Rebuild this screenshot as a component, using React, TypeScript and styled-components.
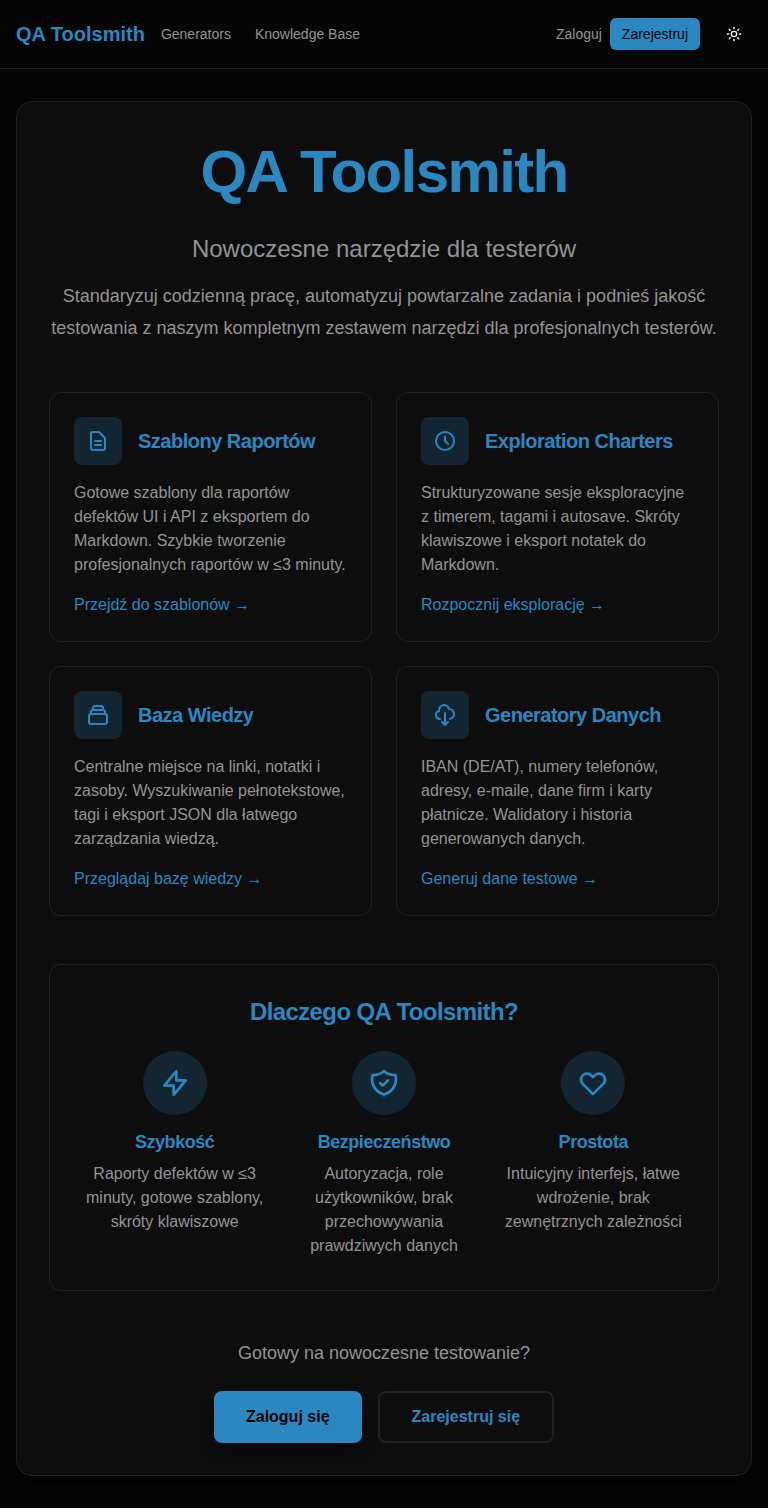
import React from "react";
import styled, { createGlobalStyle } from "styled-components";
import { Sun } from "lucide-react";

const color = {
  page: "#050505",
  panel: "#0d0d0d",
  line: "#212121",
  blue: "#2b87c0",
  tint: "#132530",
  text: "#949494",
};

const GlobalStyle = createGlobalStyle`
  *, *::before, *::after { box-sizing: border-box; }
  body {
    margin: 0;
    background: ${color.page};
    color: ${color.text};
    font: 16px/24px Arial, "Liberation Sans", sans-serif;
  }
  h1, h2, h3, p { margin: 0; }
  a { color: inherit; text-decoration: none; }
  button { font: inherit; cursor: pointer; }
`;

const Header = styled.header`
  display: flex;
  align-items: center;
  height: 69px;
  padding: 0 16px;
  border-bottom: 1px solid ${color.line};
  font-size: 14px;
  line-height: 20px;
`;

const Brand = styled.a`
  && { color: ${color.blue}; }
  font-size: 20px;
  line-height: 28px;
  font-weight: 700;
`;

const Nav = styled.nav`
  display: flex;
  gap: 24px;
  margin-left: 16px;
`;

const Account = styled.div`
  display: flex;
  align-items: center;
  gap: 8px;
  margin-left: auto;
`;

const SignUp = styled.a`
  padding: 6px 12px;
  border-radius: 6px;
  background: ${color.blue};
  && { color: ${color.page}; }
`;

const ThemeButton = styled.button`
  display: grid;
  place-items: center;
  width: 36px;
  height: 36px;
  margin-left: 8px;
  padding: 0;
  border: 0;
  background: none;
  color: #fafafa;
`;

const Main = styled.main`
  padding: 32px 16px;
`;

const Panel = styled.div`
  padding: 32px;
  border: 1px solid ${color.line};
  border-radius: 16px;
  background: ${color.panel};
  box-shadow: 0 10px 15px -3px rgba(0, 0, 0, 0.5), 0 4px 6px -4px rgba(0, 0, 0, 0.5);
`;

const Hero = styled.section`
  margin-bottom: 48px;
  text-align: center;
`;

const HeroTitle = styled.h1`
  margin-bottom: 24px;
  color: ${color.blue};
  font-size: 60px;
  line-height: 75px;
  font-weight: 700;
  letter-spacing: -0.027em;
`;

const Subtitle = styled.p`
  margin-bottom: 16px;
  font-size: 24px;
  line-height: 32px;
`;

const Lead = styled.p`
  font-size: 18px;
  line-height: 31.5px;
`;

const FeatureGrid = styled.section`
  display: grid;
  grid-template-columns: 1fr 1fr;
  gap: 24px;
  margin-bottom: 48px;
`;

const Card = styled.article`
  padding: 24px;
  border: 1px solid ${color.line};
  border-radius: 12px;
`;

const CardHead = styled.div`
  display: flex;
  align-items: center;
  gap: 16px;
  margin-bottom: 16px;
`;

const IconBox = styled.div<{ $round?: boolean }>`
  display: grid;
  place-items: center;
  width: ${(p) => (p.$round ? 64 : 48)}px;
  height: ${(p) => (p.$round ? 64 : 48)}px;
  border-radius: ${(p) => (p.$round ? "50%" : "8px")};
  background: ${color.tint};
  color: ${color.blue};
`;

const Heading = styled.h3<{ $size: number }>`
  color: ${color.blue};
  font-size: ${(p) => p.$size}px;
  line-height: 1.25;
  font-weight: 600;
  letter-spacing: -0.025em;
`;

const CardLink = styled.a`
  display: block;
  height: 24px;
  margin-top: 16px;
  && { color: ${color.blue}; }
`;

const Arrow = styled.span`
  font-family: "Liberation Serif", serif;
`;

const Why = styled.section`
  display: flex;
  flex-direction: column;
  gap: 24px;
  margin-bottom: 48px;
  padding: 32px;
  border: 1px solid ${color.line};
  border-radius: 12px;
  text-align: center;
`;

const Reasons = styled.div`
  display: grid;
  grid-template-columns: repeat(3, 1fr);
  gap: 24px;
`;

const Reason = styled.div`
  display: flex;
  flex-direction: column;
  align-items: center;

  ${Heading} { margin: 16px 0 8px; }
`;

const Cta = styled.section`
  text-align: center;
`;

const CtaText = styled.p`
  margin-bottom: 24px;
  font-size: 18px;
  line-height: 28px;
`;

const Actions = styled.div`
  display: flex;
  justify-content: center;
  gap: 16px;
`;

const Action = styled.a<{ $outlined?: boolean }>`
  display: flex;
  align-items: center;
  height: 52px;
  padding: 0 32px;
  border-radius: 8px;
  font-weight: 600;
  ${(p) =>
    p.$outlined
      ? `border: 2px solid ${color.line}; && { color: ${color.blue}; }`
      : `background: ${color.blue}; && { color: ${color.page}; }
         box-shadow: 0 10px 15px -3px rgba(0, 0, 0, 0.3), 0 4px 6px -4px rgba(0, 0, 0, 0.3);`}
`;

const paths = {
  document:
    "M9 12h6m-6 4h6m2 5H7a2 2 0 01-2-2V5a2 2 0 012-2h5.586a1 1 0 01.707.293l5.414 5.414a1 1 0 01.293.707V19a2 2 0 01-2 2z",
  clock: "M12 8v4l3 3m6-3a9 9 0 11-18 0 9 9 0 0118 0z",
  collection:
    "M19 11H5m14 0a2 2 0 012 2v6a2 2 0 01-2 2H5a2 2 0 01-2-2v-6a2 2 0 012-2m14 0V9a2 2 0 00-2-2M5 11V9a2 2 0 012-2m0 0V5a2 2 0 012-2h6a2 2 0 012 2v2M7 7h10",
  cloud: "M7 16a4 4 0 01-.88-7.903A5 5 0 1115.9 6L16 6a5 5 0 011 9.9M9 19l3 3m0 0l3-3m-3 3V10",
  bolt: "M13 10V3L4 14h7v7l9-11h-7z",
  shield:
    "M9 12l2 2 4-4m5.618-4.016A11.955 11.955 0 0112 2.944a11.955 11.955 0 01-8.618 3.04A12.02 12.02 0 003 9c0 5.591 3.824 10.29 9 11.622 5.176-1.332 9-6.03 9-11.622 0-1.042-.133-2.052-.382-3.016z",
  heart:
    "M4.318 6.318a4.5 4.5 0 000 6.364L12 20.364l7.682-7.682a4.5 4.5 0 00-6.364-6.364L12 7.636l-1.318-1.318a4.5 4.5 0 00-6.364 0z",
};

type IconName = keyof typeof paths;

const Icon = ({ name, size }: { name: IconName; size: number }) => (
  <svg width={size} height={size} viewBox="0 0 24 24" fill="none" stroke="currentColor" strokeWidth={2} strokeLinecap="round" strokeLinejoin="round">
    <path d={paths[name]} />
  </svg>
);

const features: { icon: IconName; title: string; text: string; link: string }[] = [
  {
    icon: "document",
    title: "Szablony Raportów",
    text: "Gotowe szablony dla raportów defektów UI i API z eksportem do Markdown. Szybkie tworzenie profesjonalnych raportów w ≤3 minuty.",
    link: "Przejdź do szablonów",
  },
  {
    icon: "clock",
    title: "Exploration Charters",
    text: "Strukturyzowane sesje eksploracyjne z timerem, tagami i autosave. Skróty klawiszowe i eksport notatek do Markdown.",
    link: "Rozpocznij eksplorację",
  },
  {
    icon: "collection",
    title: "Baza Wiedzy",
    text: "Centralne miejsce na linki, notatki i zasoby. Wyszukiwanie pełnotekstowe, tagi i eksport JSON dla łatwego zarządzania wiedzą.",
    link: "Przeglądaj bazę wiedzy",
  },
  {
    icon: "cloud",
    title: "Generatory Danych",
    text: "IBAN (DE/AT), numery telefonów, adresy, e-maile, dane firm i karty płatnicze. Walidatory i historia generowanych danych.",
    link: "Generuj dane testowe",
  },
];

const reasons: { icon: IconName; title: string; text: string }[] = [
  { icon: "bolt", title: "Szybkość", text: "Raporty defektów w ≤3 minuty, gotowe szablony, skróty klawiszowe" },
  { icon: "shield", title: "Bezpieczeństwo", text: "Autoryzacja, role użytkowników, brak przechowywania prawdziwych danych" },
  { icon: "heart", title: "Prostota", text: "Intuicyjny interfejs, łatwe wdrożenie, brak zewnętrznych zależności" },
];

export default function App() {
  return (
    <>
      <GlobalStyle />
      <Header>
        <Brand href="#">QA Toolsmith</Brand>
        <Nav>
          <a href="#">Generators</a>
          <a href="#">Knowledge Base</a>
        </Nav>
        <Account>
          <a href="#">Zaloguj</a>
          <SignUp href="#">Zarejestruj</SignUp>
          <ThemeButton aria-label="Motyw">
            <Sun size={16} />
          </ThemeButton>
        </Account>
      </Header>
      <Main>
        <Panel>
          <Hero>
            <HeroTitle>QA Toolsmith</HeroTitle>
            <Subtitle>Nowoczesne narzędzie dla testerów</Subtitle>
            <Lead>
              Standaryzuj codzienną pracę, automatyzuj powtarzalne zadania i podnieś jakość testowania z naszym
              kompletnym zestawem narzędzi dla profesjonalnych testerów.
            </Lead>
          </Hero>
          <FeatureGrid>
            {features.map((f) => (
              <Card key={f.title}>
                <CardHead>
                  <IconBox>
                    <Icon name={f.icon} size={24} />
                  </IconBox>
                  <Heading $size={20}>{f.title}</Heading>
                </CardHead>
                <p>{f.text}</p>
                <CardLink href="#">
                  {f.link} <Arrow>→</Arrow>
                </CardLink>
              </Card>
            ))}
          </FeatureGrid>
          <Why>
            <Heading as="h2" $size={24}>Dlaczego QA Toolsmith?</Heading>
            <Reasons>
              {reasons.map((r) => (
                <Reason key={r.title}>
                  <IconBox $round>
                    <Icon name={r.icon} size={32} />
                  </IconBox>
                  <Heading $size={18}>{r.title}</Heading>
                  <p>{r.text}</p>
                </Reason>
              ))}
            </Reasons>
          </Why>
          <Cta>
            <CtaText>Gotowy na nowoczesne testowanie?</CtaText>
            <Actions>
              <Action href="#">Zaloguj się</Action>
              <Action href="#" $outlined>Zarejestruj się</Action>
            </Actions>
          </Cta>
        </Panel>
      </Main>
    </>
  );
}
